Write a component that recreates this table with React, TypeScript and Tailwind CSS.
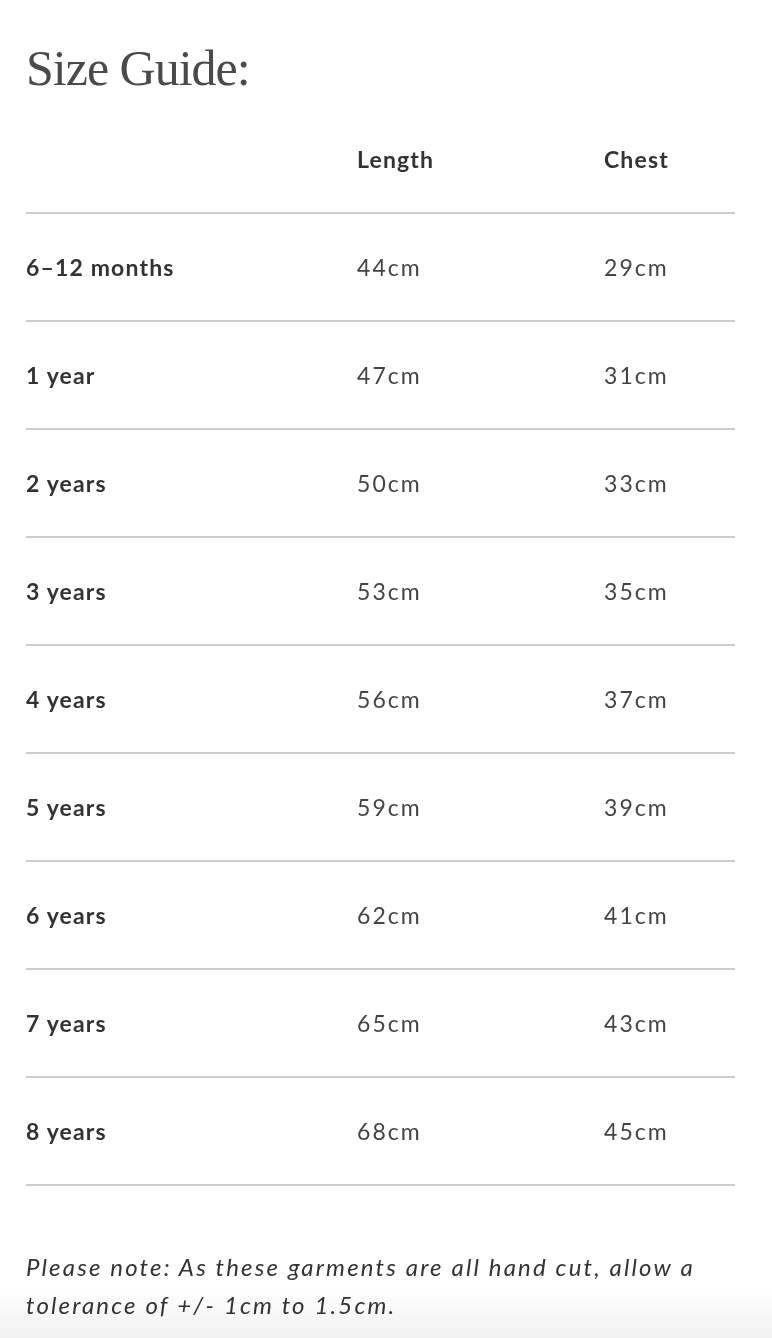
const rows = [
  { size: "6–12 months", length: "44cm", chest: "29cm" },
  { size: "1 year", length: "47cm", chest: "31cm" },
  { size: "2 years", length: "50cm", chest: "33cm" },
  { size: "3 years", length: "53cm", chest: "35cm" },
  { size: "4 years", length: "56cm", chest: "37cm" },
  { size: "5 years", length: "59cm", chest: "39cm" },
  { size: "6 years", length: "62cm", chest: "41cm" },
  { size: "7 years", length: "65cm", chest: "43cm" },
  { size: "8 years", length: "68cm", chest: "45cm" },
];

const App = () => {
  return (
    <div className="min-h-screen w-full bg-white font-['Lato',sans-serif] text-[#333]">
      {/* soft fade at the bottom of the viewport, kept behind the text */}
      <div className="pointer-events-none fixed inset-x-0 bottom-0 z-0 h-[50px] bg-gradient-to-b from-white/0 to-[#f1f1f1]"></div>

      <div className="relative z-10 px-[26px]">
        <h2 className="pt-[43px] font-['Liberation_Serif',serif] text-[50px] font-normal leading-none tracking-[-0.02em] text-[#4a4a4a]">
          Size Guide:
        </h2>

        <div className="mt-[13px] mr-[11px]">
          <div className="flex h-[108px] items-center border-b-2 border-[#d0cbc6] text-[23px] font-bold tracking-[0.05em]">
            <div className="w-[331px]"></div>
            <div className="w-[247px]">Length</div>
            <div className="flex-1">Chest</div>
          </div>

          {rows.map((row) => (
            <div
              key={row.size}
              className="flex h-[108px] items-center border-b-2 border-[#d0cbc6] text-[23px]"
            >
              <div className="w-[331px] font-bold tracking-[0.05em]">{row.size}</div>
              <div className="w-[247px] tracking-[0.09em] text-[#444]">{row.length}</div>
              <div className="flex-1 tracking-[0.09em] text-[#444]">{row.chest}</div>
            </div>
          ))}
        </div>

        <p className="pt-[62px] pb-[40px] pr-[20px] text-[24px] italic leading-[38px] tracking-[0.09em] text-[#333]">
          Please note: As these garments are all hand cut, allow a tolerance of +/- 1cm to 1.5cm.
        </p>
      </div>
    </div>
  );
};

export default App;
